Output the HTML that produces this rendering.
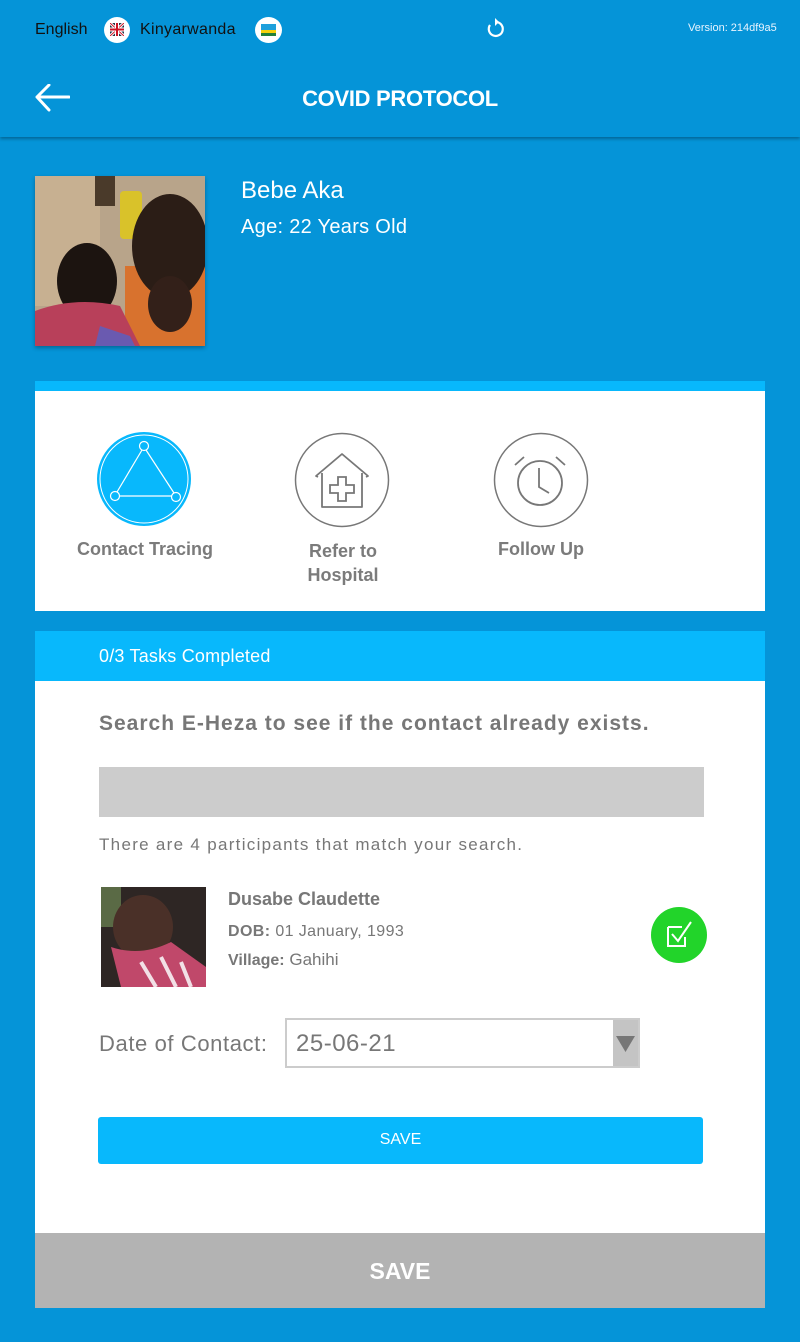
<!DOCTYPE html>
<html><head><meta charset="utf-8"><style>
*{box-sizing:border-box;margin:0;padding:0}
body{width:800px;height:1342px;background:#0594d8;font-family:"Liberation Sans",sans-serif;position:relative;overflow:hidden}
.a{position:absolute}
</style></head><body>
<div class="a" style="left:0;top:0;width:800px;height:137px;background:#0594d8;box-shadow:0 2px 3px rgba(0,0,0,.3)"></div>
<div class="a" style="left:35px;top:21px;font-size:16px;color:#111">English</div>
<div class="a" style="left:104px;top:17px;width:26px;height:26px;border-radius:50%;background:#fff"></div>
<svg class="a" style="left:110px;top:23px" width="14" height="13" viewBox="0 0 14 13"><rect width="14" height="13" fill="#234"/><path d="M0 0L14 13M14 0L0 13" stroke="#fff" stroke-width="3"/><path d="M0 0L14 13M14 0L0 13" stroke="#c12" stroke-width="1"/><path d="M7 0V13M0 6.5H14" stroke="#fff" stroke-width="4"/><path d="M7 0V13M0 6.5H14" stroke="#c12" stroke-width="2"/></svg>
<div class="a" style="left:140px;top:21px;font-size:16px;color:#111;letter-spacing:0.3px">Kinyarwanda</div>
<div class="a" style="left:255px;top:17px;width:27px;height:26px;border-radius:50%;background:#fff"></div>
<div class="a" style="left:261px;top:24px;width:15px;height:6px;background:#1ea0dc"></div>
<div class="a" style="left:261px;top:30px;width:15px;height:3px;background:#f5d10c"></div>
<div class="a" style="left:261px;top:33px;width:15px;height:3px;background:#22803a"></div>
<svg class="a" style="left:484px;top:18px" width="22" height="22" viewBox="0 0 22 22"><path d="M6 7A7 7 0 1 0 11 4" fill="none" stroke="#fff" stroke-width="2.2"/><path d="M11 0L15 4L11 8Z" fill="#fff"/></svg>
<div class="a" style="left:688px;top:22px;font-size:11px;color:#e8f4ff">Version: 214df9a5</div>
<svg class="a" style="left:34px;top:84px" width="36" height="28" viewBox="0 0 36 28"><path d="M35 13H3M15 1L3 13L15 26" fill="none" stroke="#fff" stroke-width="3" stroke-linecap="round" stroke-linejoin="round"/></svg>
<div class="a" style="left:0;top:86px;width:800px;text-align:center;font-size:22px;font-weight:bold;color:#fff;letter-spacing:-0.3px">COVID PROTOCOL</div>

<svg class="a" style="left:35px;top:176px;box-shadow:0 2px 4px rgba(0,0,0,.3)" width="170" height="170" viewBox="0 0 170 170"><rect width="170" height="170" fill="#b8a48a"/><rect width="65" height="130" fill="#c7b091"/><rect x="60" y="0" width="20" height="30" fill="#4a3a2a"/><rect x="85" y="15" width="22" height="48" rx="4" fill="#d9c22a"/><rect x="90" y="90" width="80" height="80" fill="#d8722e"/><ellipse cx="135" cy="70" rx="38" ry="52" fill="#2b1d16"/><ellipse cx="135" cy="128" rx="22" ry="28" fill="#332019"/><ellipse cx="52" cy="105" rx="30" ry="38" fill="#1c1410"/><path d="M0 135Q40 120 85 130L105 170H0Z" fill="#b8405a"/><path d="M60 170L65 150L95 160L100 170Z" fill="#6a5ab0"/></svg>
<div class="a" style="left:241px;top:177px;font-size:24px;color:#fff">Bebe Aka</div>
<div class="a" style="left:241px;top:216px;font-size:20px;color:#fff;letter-spacing:0.3px">Age: 22 Years Old</div>

<div class="a" style="left:35px;top:381px;width:730px;height:10px;background:#08b8fc"></div>
<div class="a" style="left:35px;top:391px;width:730px;height:220px;background:#fff"></div>
<svg class="a" style="left:96px;top:431px" width="96" height="96" viewBox="0 0 96 96"><circle cx="48" cy="48" r="47" fill="#08b8fc"/><circle cx="48" cy="48" r="44" fill="none" stroke="#fff" stroke-width="1"/><g fill="none" stroke="#fff" stroke-width="1.2"><circle cx="48" cy="15" r="4.5"/><circle cx="19" cy="65" r="4.5"/><circle cx="80" cy="66" r="4.5"/><path d="M46 19L21 61M23 65H76M50 19L78 62"/></g></svg>
<div class="a" style="left:55px;top:539px;width:180px;text-align:center;font-size:18px;font-weight:bold;color:#7b7b7b">Contact Tracing</div>
<svg class="a" style="left:294px;top:432px" width="96" height="96" viewBox="0 0 96 96"><circle cx="48" cy="48" r="46.5" fill="none" stroke="#777" stroke-width="1.5"/><path d="M24 45L22 44L48 22L74 44L72 45M28 41V75H68V41" fill="none" stroke="#777" stroke-width="1.8" stroke-linejoin="round"/><path d="M44 45H52V53H60V61H52V69H44V61H36V53H44Z" fill="none" stroke="#777" stroke-width="1.8"/></svg>
<div class="a" style="left:253px;top:539px;width:180px;text-align:center;font-size:18px;font-weight:bold;color:#7b7b7b;line-height:24px">Refer to<br>Hospital</div>
<svg class="a" style="left:493px;top:432px" width="96" height="96" viewBox="0 0 96 96"><circle cx="48" cy="48" r="46.5" fill="none" stroke="#777" stroke-width="1.5"/><circle cx="47" cy="51" r="22" fill="none" stroke="#777" stroke-width="1.8"/><path d="M46 36V55L56 61M22 33L31 25M72 33L63 25" fill="none" stroke="#777" stroke-width="1.8"/></svg>
<div class="a" style="left:451px;top:539px;width:180px;text-align:center;font-size:18px;font-weight:bold;color:#7b7b7b">Follow Up</div>

<div class="a" style="left:35px;top:631px;width:730px;height:50px;background:#08b8fc"></div>
<div class="a" style="left:99px;top:646px;font-size:18px;color:#fff;letter-spacing:0.2px">0/3 Tasks Completed</div>
<div class="a" style="left:35px;top:681px;width:730px;height:552px;background:#fff"></div>
<div class="a" style="left:99px;top:712px;font-size:21px;font-weight:bold;color:#777;letter-spacing:1px">Search E-Heza to see if the contact already exists.</div>
<div class="a" style="left:99px;top:767px;width:605px;height:50px;background:#ccc"></div>
<div class="a" style="left:99px;top:835px;font-size:17px;color:#777;letter-spacing:1.3px">There are 4 participants that match your search.</div>
<svg class="a" style="left:101px;top:887px" width="105" height="100" viewBox="0 0 105 100"><rect width="105" height="100" fill="#2e2624"/><rect width="20" height="40" fill="#5a6a45"/><ellipse cx="42" cy="40" rx="30" ry="32" fill="#4a3028"/><path d="M10 60Q40 70 70 55L105 80V100H20Z" fill="#c0486a"/><path d="M40 75L55 100M60 70L75 100M80 75L90 100" stroke="#f2e0e6" stroke-width="4"/></svg>
<div class="a" style="left:228px;top:889px;font-size:18px;font-weight:bold;color:#777">Dusabe Claudette</div>
<div class="a" style="left:228px;top:923px;font-size:16px;color:#777;letter-spacing:0.4px"><b>DOB:</b> 01 January, 1993</div>
<div class="a" style="left:228px;top:950px;font-size:17px;color:#777"><b style="font-size:16px">Village:</b> Gahihi</div>
<div class="a" style="left:651px;top:907px;width:56px;height:56px;border-radius:50%;background:#22d42a"></div>
<svg class="a" style="left:665px;top:919px" width="30" height="30" viewBox="0 0 30 30"><path d="M3 8H17M3 8V27H20V18" fill="none" stroke="#fff" stroke-width="2"/><path d="M7 15L13 22L26 3" fill="none" stroke="#fff" stroke-width="2"/></svg>
<div class="a" style="left:99px;top:1031px;font-size:22px;color:#777;letter-spacing:0.6px">Date of Contact:</div>
<div class="a" style="left:285px;top:1018px;width:355px;height:50px;border:2px solid #ccc;background:#fff"></div>
<div class="a" style="left:296px;top:1030px;font-size:24px;color:#777;letter-spacing:0.5px">25-06-21</div>
<div class="a" style="left:613px;top:1020px;width:25px;height:46px;background:#c4c4c4"></div>
<svg class="a" style="left:616px;top:1036px" width="19" height="16" viewBox="0 0 19 16"><path d="M0 0H19L9.5 16Z" fill="#777"/></svg>
<div class="a" style="left:98px;top:1117px;width:605px;height:47px;background:#08b8fc;border-radius:3px;color:#fff;font-size:16px;text-align:center;line-height:46px">SAVE</div>
<div class="a" style="left:35px;top:1233px;width:730px;height:75px;background:#b3b3b3;color:#fff;font-size:23px;font-weight:bold;text-align:center;line-height:76px">SAVE</div>
</body></html>
